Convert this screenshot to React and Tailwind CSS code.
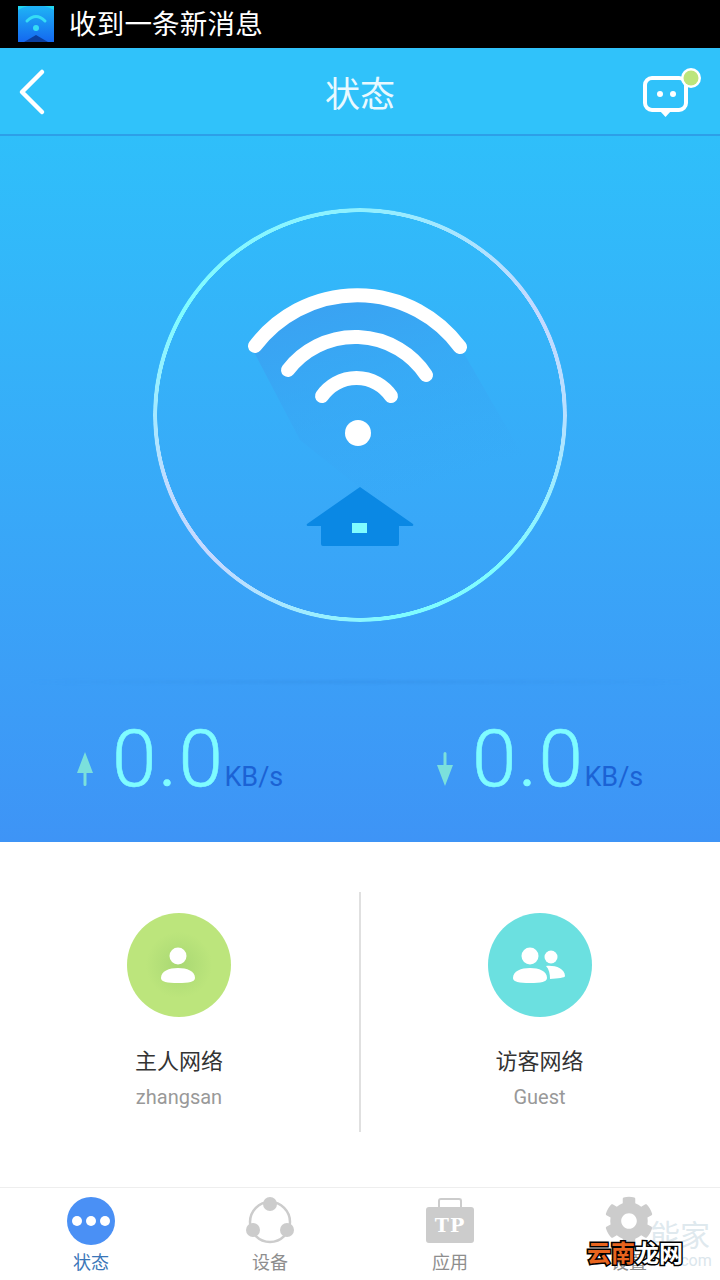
import { FaCog } from "react-icons/fa";

const CJK = 'font-["Noto_Sans_CJK_SC","Noto_Sans",sans-serif]';

function AppIcon() {
    return (
        <svg width="36" height="36" viewBox="0 0 36 36">
            <defs>
                <linearGradient id="appIcon" x1="0" y1="0" x2="0" y2="1">
                    <stop offset="0" stopColor="#1fb4f5" />
                    <stop offset="1" stopColor="#1468f0" />
                </linearGradient>
            </defs>
            <rect width="36" height="36" fill="url(#appIcon)" />
            <path d="M0 4 Q18 -6 36 4 V0 H0 Z" fill="#22d6f0" />
            <path d="M9 15 Q18 6 27 15" fill="none" stroke="#35dcf5" strokeWidth="3" strokeLinecap="round" />
            <circle cx="18" cy="22" r="3" fill="#35dcf5" />
            <path d="M6 36 L18 29 L30 36 Z" fill="#0b3f9e" />
        </svg>
    );
}

function ChatIcon() {
    return (
        <svg width="60" height="50" viewBox="0 0 60 50" className="block">
            <rect x="2" y="10" width="41" height="32" rx="7" fill="none" stroke="#fff" strokeWidth="4" />
            <path d="M17 43 H28 L22.5 49 Z" fill="#fff" />
            <circle cx="17" cy="26" r="3" fill="#fff" />
            <circle cx="30" cy="26" r="3" fill="#fff" />
            <circle cx="48" cy="10" r="10" fill="#fff" />
            <circle cx="48" cy="10" r="7.5" fill="#bce57c" />
        </svg>
    );
}

function WifiGraphic() {
    return (
        <svg viewBox="153 208 414 414" className="absolute inset-0 h-full w-full">
            <defs>
                <linearGradient id="longShadow" x1="0.3" y1="0" x2="0.7" y2="1">
                    <stop offset="0" stopColor="#3aa2f2" />
                    <stop offset="0.4" stopColor="#3aa2f2" stopOpacity="0.45" />
                    <stop offset="0.85" stopColor="#3aa2f2" stopOpacity="0" />
                </linearGradient>
            </defs>
            <path d="M253 350 A128 128 0 0 1 462 350 L530 468 L400 520 L300 440 Z" fill="url(#longShadow)" />
            <g fill="none" stroke="#fff" strokeWidth="14" strokeLinecap="round">
                <path d="M255 346 A128 128 0 0 1 460 347" />
                <path d="M288 370 A85 85 0 0 1 426 375" />
                <path d="M322 396 A42 42 0 0 1 391 396" />
            </g>
            <circle cx="358" cy="433" r="13" fill="#fff" />
            <path d="M360 487 L413 524 Q414 526 412 526 H399 V544 Q399 546 397 546 H323 Q321 546 321 544 V526 H308 Q306 526 307 524 Z" fill="#0a88e4" />
            <rect x="352" y="523" width="15" height="10" fill="#7ffcff" />
        </svg>
    );
}

function Arrow({ down }) {
    return (
        <svg width="16" height="34" viewBox="0 0 16 34" className="mb-1 shrink-0">
            {down ? (
                <path d="M6.5 1.5 a1.5 1.5 0 0 1 3 0 V13 H16 L8 34 L0 13 H6.5 Z" fill="#7be0dc" />
            ) : (
                <path d="M8 0 L16 21 H9.5 V32.5 a1.5 1.5 0 0 1 -3 0 V21 H0 Z" fill="#7be0dc" />
            )}
        </svg>
    );
}

function Speed({ down }) {
    return (
        <div className="flex items-baseline pl-[77px] font-['Roboto',sans-serif]">
            <Arrow down={down} />
            <span className="ml-[19px] text-[80px] leading-[80px] font-light tracking-[1.5px] text-[#7ffcff] [-webkit-text-stroke:0.6px_#7ffcff]">0.0</span>
            <span className="text-[27px] text-[#1b62d4]">KB/s</span>
        </div>
    );
}

function Network({ name, sub, circle, children }) {
    return (
        <div className="flex flex-col items-center pt-[21px]">
            <div className={`flex h-[104px] w-[104px] items-center justify-center rounded-full ${circle}`}>
                {children}
            </div>
            <div className={`mt-[27px] text-[22px] leading-[30px] text-[#333] ${CJK}`}>{name}</div>
            <div className="mt-[9px] font-['Roboto',sans-serif] text-[20px] leading-[28px] text-[#999]">{sub}</div>
        </div>
    );
}

function Tab({ label, active, className, children }) {
    return (
        <div className={`flex flex-col items-center ${className}`}>
            <div className="flex h-[56px] w-[60px] items-center justify-center">{children}</div>
            <div className={`-mt-[2px] text-[18px] leading-[28px] ${CJK} ${active ? "text-[#3a76b8]" : "text-[#8e8e8e]"}`}>
                {label}
            </div>
        </div>
    );
}

export default function App() {
    return (
        <div className="relative flex h-[1280px] w-[720px] flex-col overflow-hidden bg-white">
            {/* Status bar */}
            <div className="flex h-[48px] items-center bg-black pl-[18px]">
                <AppIcon />
                <span className={`mb-[3px] ml-[15px] text-[27.5px] leading-none tracking-[0.2px] text-white ${CJK}`}>收到一条新消息</span>
            </div>

            {/* Header */}
            <div className="relative flex h-[88px] items-center justify-center border-b-2 border-[#2d9fe8] bg-[#30c2fa]">
                <svg width="30" height="48" viewBox="0 0 30 48" className="absolute left-[17px] top-[20px]">
                    <path d="M25 4 L5 24 L25 44" fill="none" stroke="#fff" strokeWidth="4.5" strokeLinecap="round" strokeLinejoin="round" />
                </svg>
                <span className={`text-[35px] leading-none text-[#e9f9ff] ${CJK}`}>状态</span>
                <div className="absolute left-[643px] top-[20px]">
                    <ChatIcon />
                </div>
            </div>

            {/* Hero */}
            <div className="flex h-[706px] flex-col bg-gradient-to-b from-[#2fbffa] to-[#3e94f6] pt-[72px]">
                <div className="relative mx-auto h-[414px] w-[414px]">
                    <div className="absolute inset-0 rounded-full bg-[conic-gradient(#8ff0ff_0deg,#c5d9ff_60deg,#b8e0ff_90deg,#7ffcff_135deg,#7ffcff_170deg,#c5d9ff_225deg,#c0dcff_250deg,#7ffcff_300deg,#8ff0ff_360deg)] [mask-image:radial-gradient(circle,transparent_202.5px,black_203px)]"></div>
                    <WifiGraphic />
                </div>
                <div className="mx-[30px] mt-[59px] h-[2px] rounded-full bg-gradient-to-r from-transparent via-[#2f86dc]/50 to-transparent blur-[1.5px]"></div>
                <div className="mt-[36px] grid grid-cols-2">
                    <Speed />
                    <Speed down />
                </div>
            </div>

            {/* Networks */}
            <div className="grid flex-1 grid-cols-2 pt-[50px]">
                <div className="h-[240px] pr-[2px]">
                    <Network name="主人网络" sub="zhangsan" circle="bg-[radial-gradient(circle,#a9d873_0%,#bce57c_45%)]">
                        <svg width="40" height="40" viewBox="0 0 40 40">
                            <circle cx="19" cy="11" r="8.5" fill="#fff" />
                            <path d="M2 33 C2 26 10 23 19 23 C28 23 36 26 36 33 C36 37 30 38 19 38 C8 38 2 37 2 33 Z" fill="#fff" />
                        </svg>
                    </Network>
                </div>
                <div className="-ml-px h-[240px] border-l-2 border-[#e0e0e0] pr-[2px]">
                    <Network name="访客网络" sub="Guest" circle="bg-[#6be0e0]">
                        <svg width="56" height="40" viewBox="0 0 56 40">
                            <circle cx="18" cy="11" r="8.5" fill="#fff" />
                            <path d="M1 33 C1 26 9 23 18 23 C27 23 35 26 35 33 C35 37 29 38 18 38 C7 38 1 37 1 33 Z" fill="#fff" />
                            <circle cx="39" cy="12" r="6.5" fill="#fff" />
                            <path d="M34 21 C42 20 53 23 53 31 C53 33 46 33 38 34 C38 29 37 24 34 21 Z" fill="#fff" />
                        </svg>
                    </Network>
                </div>
            </div>

            {/* Tab bar */}
            <div className="grid h-[93px] grid-cols-4 border-t border-[#eee] pt-[5px]">
                <Tab label="状态" active className="pl-[2px]">
                    <svg width="48" height="48" viewBox="0 0 48 48">
                        <circle cx="24" cy="24" r="24" fill="#4a90f5" />
                        <circle cx="10" cy="24" r="5" fill="#fff" />
                        <circle cx="24" cy="24" r="5" fill="#fff" />
                        <circle cx="38" cy="24" r="5" fill="#fff" />
                    </svg>
                </Tab>
                <Tab label="设备">
                    <svg width="48" height="48" viewBox="0 0 48 48">
                        <circle cx="24" cy="25" r="20" fill="none" stroke="#ccc" strokeWidth="2.5" />
                        <circle cx="24" cy="7" r="7" fill="#ccc" />
                        <circle cx="7" cy="33" r="7" fill="#ccc" />
                        <circle cx="41" cy="33" r="7" fill="#ccc" />
                    </svg>
                </Tab>
                <Tab label="应用">
                    <div className="relative mt-[8px] flex h-[36px] w-[48px] items-center justify-center rounded-[3px] bg-[#ccc]">
                        <div className="absolute left-[12px] top-[-9px] h-[9px] w-[24px] rounded-t-[3px] border-2 border-b-0 border-[#ccc]"></div>
                        <span className="font-['DejaVu_Serif',serif] text-[19px] leading-none font-bold tracking-[1px] text-white">TP</span>
                    </div>
                </Tab>
                <Tab label="设置" className="pr-[2px]">
                    <FaCog size={50} color="#ccc" />
                </Tab>
            </div>

            {/* Watermark over the tab bar */}
            <div className={`absolute left-[650px] top-[1218px] text-[30px] leading-none whitespace-nowrap text-[#dbe6ec]/90 ${CJK}`}>能家</div>
            <div className="absolute left-[676px] top-[1253px] font-['Roboto',sans-serif] text-[16px] leading-none text-[#dbe6ec]">.com</div>
            <div className={`absolute left-[587px] top-[1238px] text-[24px] leading-[28px] font-bold whitespace-nowrap [paint-order:stroke_fill] [-webkit-text-stroke:3px_#000] ${CJK}`}>
                <span className="text-[#e8641e]">云南</span>
                <span className="text-white">龙网</span>
            </div>
        </div>
    );
}
